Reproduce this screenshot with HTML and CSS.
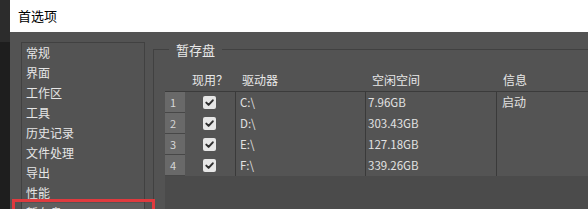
FILE: index.html
```html
<!DOCTYPE html>
<html lang="zh-CN">
<head>
<meta charset="utf-8">
<title>首选项</title>
<link rel="stylesheet" href="styles.css">
</head>
<body>
<div class="screen">
  <div class="strip">
    <div class="strip-top"></div>
    <div class="strip-bottom"></div>
  </div>
  <div class="dialog">
    <div class="titlebar">首选项</div>
    <div class="content">
      <ul class="nav">
        <li>常规</li>
        <li>界面</li>
        <li>工作区</li>
        <li>工具</li>
        <li>历史记录</li>
        <li>文件处理</li>
        <li>导出</li>
        <li>性能</li>
        <li class="selected">暂存盘</li>
      </ul>
      <fieldset class="scratch">
        <legend>暂存盘</legend>
        <div class="table">
          <div class="thead">
            <div class="c num"></div>
            <div class="c chk">现用？</div>
            <div class="c drv">驱动器</div>
            <div class="c free">空闲空间</div>
            <div class="c info">信息</div>
          </div>
          <div class="tbody">
            <div class="tr">
              <div class="c num">1</div>
              <div class="c chk"><span class="cb"><svg viewBox="0 0 13 13" width="13" height="13"><path d="M3.3 6.6 L5.6 8.9 L9.8 4.3" fill="none" stroke="#2e2e2e" stroke-width="2" stroke-linecap="round" stroke-linejoin="round"/></svg></span></div>
              <div class="c drv">C:\</div>
              <div class="c free">7.96GB</div>
              <div class="c info">启动</div>
            </div>
            <div class="tr">
              <div class="c num">2</div>
              <div class="c chk"><span class="cb"><svg viewBox="0 0 13 13" width="13" height="13"><path d="M3.3 6.6 L5.6 8.9 L9.8 4.3" fill="none" stroke="#2e2e2e" stroke-width="2" stroke-linecap="round" stroke-linejoin="round"/></svg></span></div>
              <div class="c drv">D:\</div>
              <div class="c free">303.43GB</div>
              <div class="c info"></div>
            </div>
            <div class="tr">
              <div class="c num">3</div>
              <div class="c chk"><span class="cb"><svg viewBox="0 0 13 13" width="13" height="13"><path d="M3.3 6.6 L5.6 8.9 L9.8 4.3" fill="none" stroke="#2e2e2e" stroke-width="2" stroke-linecap="round" stroke-linejoin="round"/></svg></span></div>
              <div class="c drv">E:\</div>
              <div class="c free">127.18GB</div>
              <div class="c info"></div>
            </div>
            <div class="tr">
              <div class="c num">4</div>
              <div class="c chk"><span class="cb"><svg viewBox="0 0 13 13" width="13" height="13"><path d="M3.3 6.6 L5.6 8.9 L9.8 4.3" fill="none" stroke="#2e2e2e" stroke-width="2" stroke-linecap="round" stroke-linejoin="round"/></svg></span></div>
              <div class="c drv">F:\</div>
              <div class="c free">339.26GB</div>
              <div class="c info"></div>
            </div>
          </div>
        </div>
      </fieldset>
    </div>
  </div>
  <div class="annot"></div>
</div>
</body>
</html>
```
FILE: styles.css
```css
html, body {
  margin: 0;
  padding: 0;
  width: 588px;
  height: 209px;
  overflow: hidden;
  background: #535353;
}
.screen {
  position: relative;
  display: flex;
  width: 588px;
  height: 209px;
  overflow: hidden;
  font-family: "Noto Sans CJK SC", "Noto Sans", sans-serif;
}
.strip {
  flex: none;
  width: 10px;
  display: flex;
  flex-direction: column;
}
.strip-top {
  height: 42px;
  background: #2c2c2c;
}
.strip-bottom {
  flex: 1;
  background: #1e1e1e;
}
.dialog {
  flex: 1;
  display: flex;
  flex-direction: column;
  min-width: 0;
}
.titlebar {
  flex: none;
  height: 32px;
  line-height: 32px;
  background: #ffffff;
  color: #000000;
  font-size: 13px;
  padding-left: 8px;
}
.content {
  flex: 1;
  display: flex;
  align-items: flex-start;
  background: #535353;
  padding: 10px 0 0 11px;
  min-height: 0;
}
.nav {
  flex: none;
  list-style: none;
  margin: 0;
  padding: 0;
  width: 124px;
  box-sizing: border-box;
  border: 1px solid #414141;
  height: 240px;
}
.nav li {
  height: 20px;
  line-height: 20px;
  font-size: 12px;
  color: #e6e6e6;
  padding-left: 4px;
}
.nav li.selected {
  background: #5f5f5f;
}
.scratch {
  flex: none;
  width: 500px;
  margin: 0 0 0 8px;
  padding: 12px 0 0 11px;
  border: 1px solid #414141;
  min-inline-size: 0;
}
.scratch legend {
  margin-left: 4px;
  padding: 0 7px;
  font-size: 13px;
  line-height: 15px;
  color: #e8e8e8;
}
.table {
  background: #4b4b4b;
  height: 200px;
  font-size: 12px;
  color: #e2e2e2;
}
.thead {
  display: flex;
  background: #535353;
  border-bottom: 1px solid #3b3b3b;
}
.thead .c {
  height: 22px;
  line-height: 22px;
  padding-left: 6px;
  color: #e8e8e8;
}
.thead .num {
  padding-left: 0;
}
.thead .chk {
  padding-left: 7px;
}
.c {
  flex: none;
  box-sizing: border-box;
  white-space: nowrap;
}
.num { width: 20px; }
.chk { width: 51px; }
.drv { width: 130px; }
.free { width: 131px; }
.info { width: 130px; }
.tr {
  display: flex;
  height: 21px;
}
.tr .c {
  height: 21px;
  line-height: 20px;
  background: #545454;
  font-size: 11.5px;
}
.tr .num {
  background: #696969;
  border-bottom: 1px solid #474747;
  padding-left: 5px;
  color: #d6d6d6;
  font-size: 11px;
}
.tr .chk,
.tr .drv,
.tr .free {
  border-right: 1px solid #3a3a3a;
}
.tr .chk {
  display: flex;
  align-items: center;
  justify-content: center;
  padding-bottom: 1px;
}
.tr .drv { padding-left: 4px; }
.tr .free { padding-left: 2px; }
.tr .info { padding-left: 5px; font-size: 12px; }
.cb {
  display: block;
  width: 13px;
  height: 13px;
  background: #e6e6e6;
  border-radius: 2px;
  margin-left: -2px;
}
.cb svg {
  display: block;
}
.annot {
  position: absolute;
  left: 12px;
  top: 199px;
  width: 143px;
  height: 30px;
  box-sizing: border-box;
  border: 3px solid #e03a3e;
}
```
